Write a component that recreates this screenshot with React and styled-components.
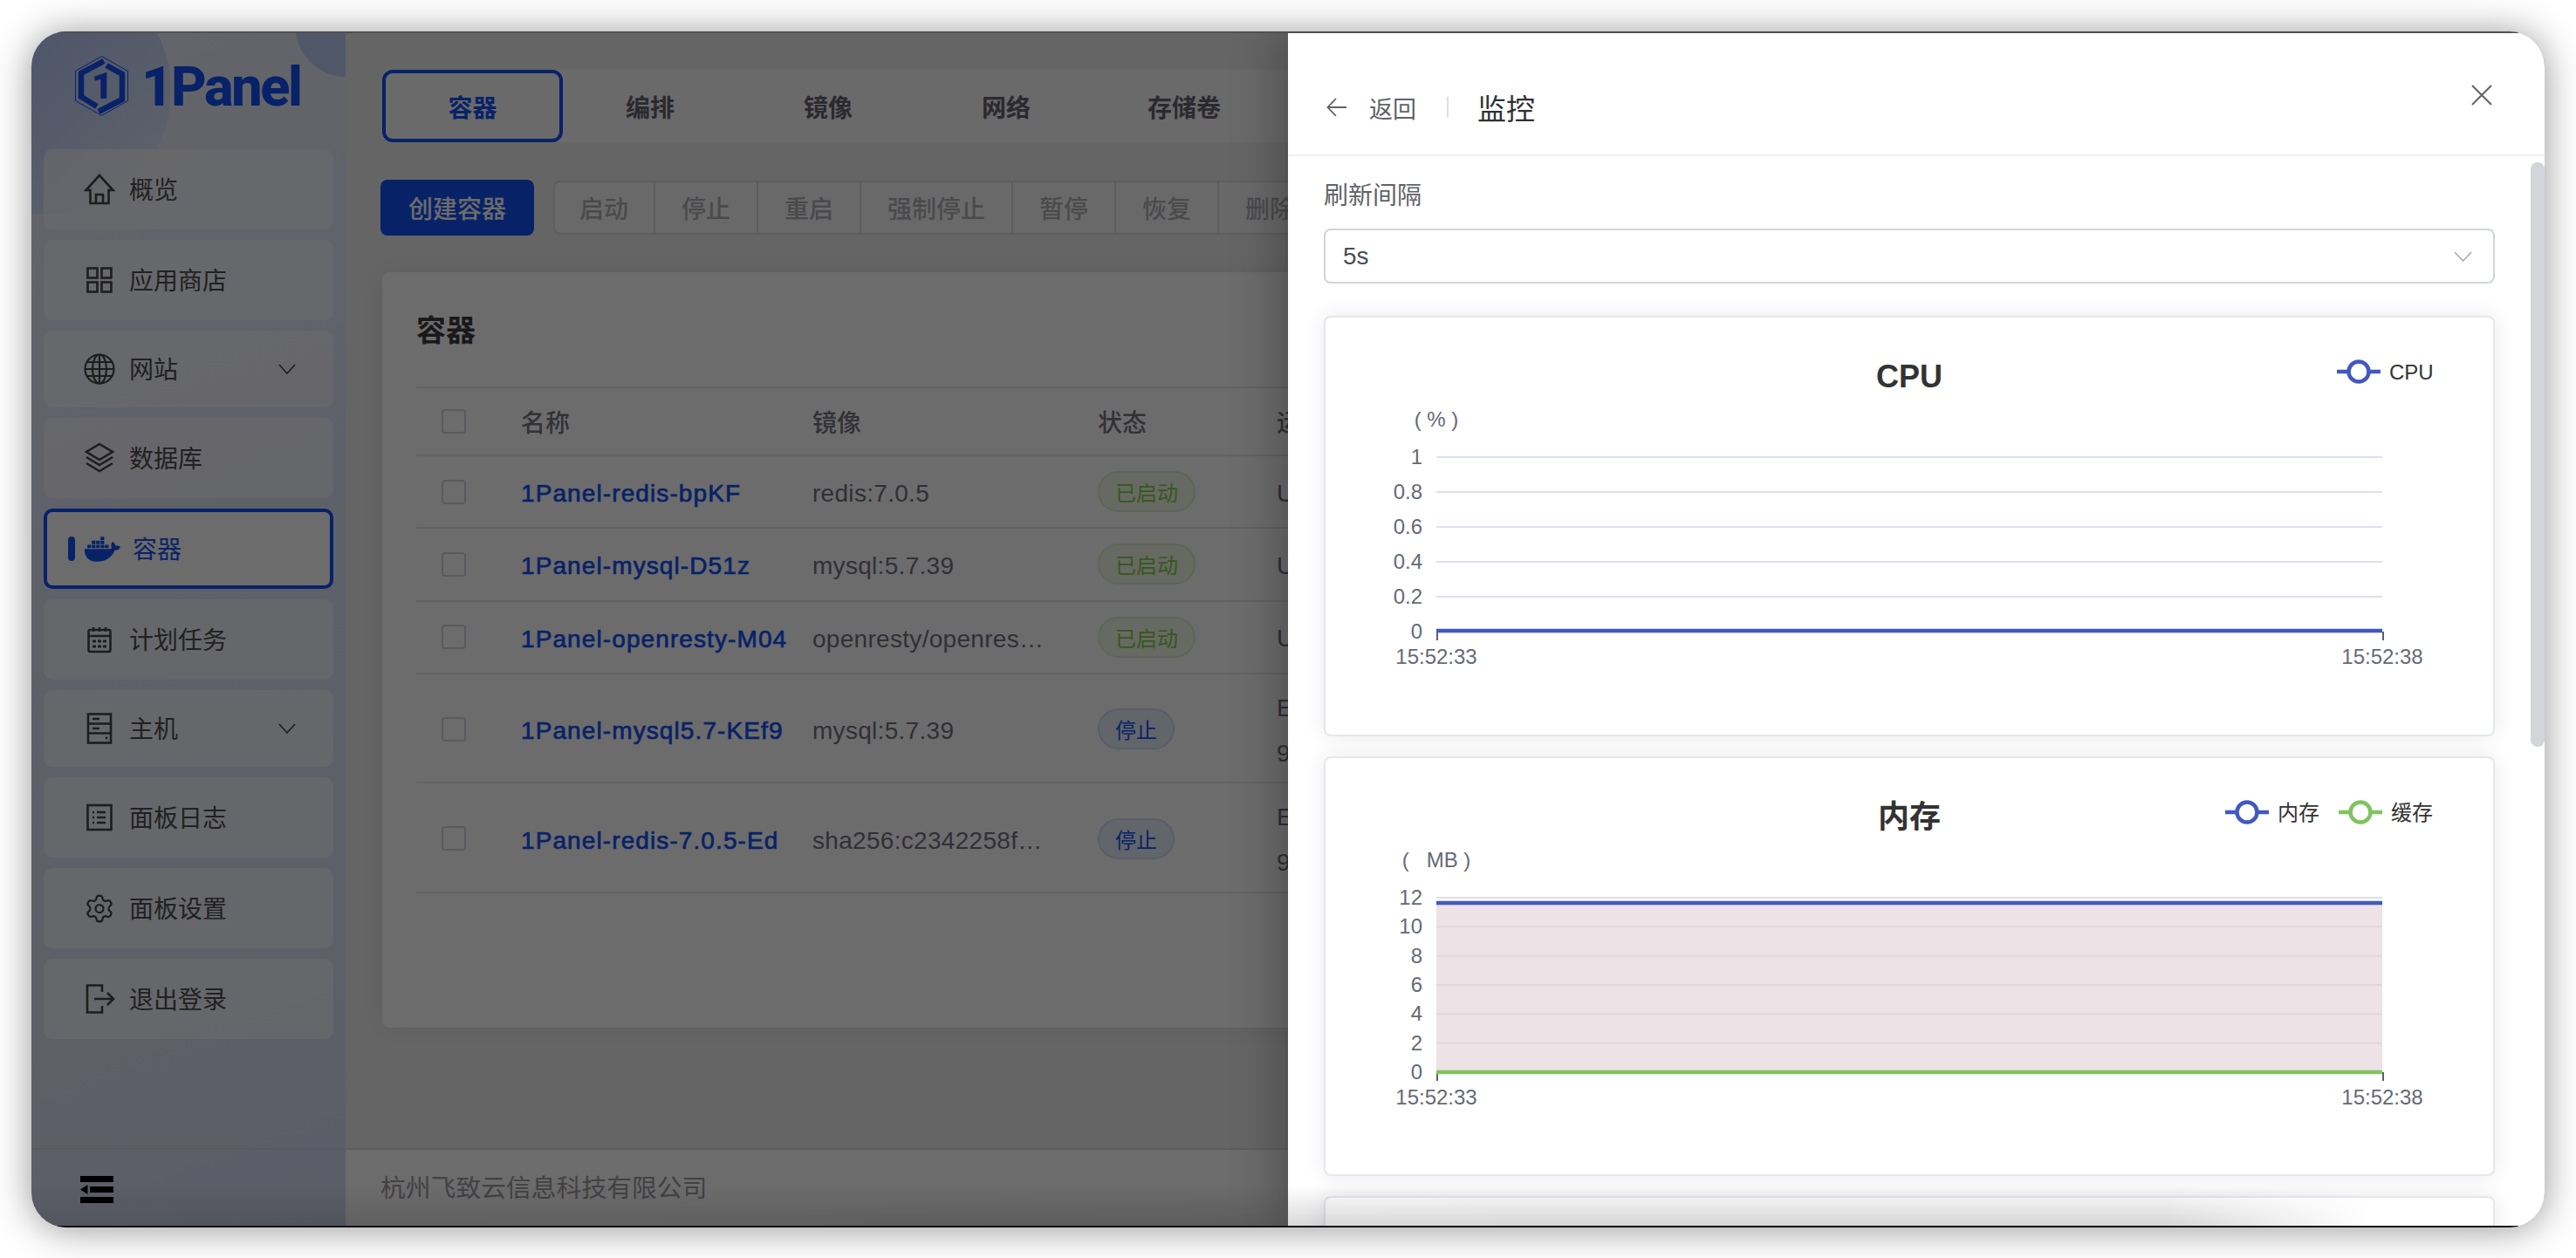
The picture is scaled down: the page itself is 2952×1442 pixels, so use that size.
import React from "react";
import styled, { createGlobalStyle } from "styled-components";
import { Settings } from "lucide-react";
import { FaDocker } from "react-icons/fa";

const GlobalStyle = createGlobalStyle`
  html, body {
    margin: 0;
    padding: 0;
    background: #fff;
    font-family: "Liberation Sans", "Noto Sans CJK SC", sans-serif;
  }
  * { box-sizing: border-box; }
`;

const PRIMARY = "#1350f5";

const HomeIcon = () => (
  <svg width="36" height="36" viewBox="0 0 36 36" fill="none" stroke="currentColor" strokeWidth="2.6">
    <path d="M18 2 2.5 19h5v15h21V19h5Z" />
    <path d="M14 34V24h8v10" />
  </svg>
);
const GridIcon = () => (
  <svg width="36" height="36" viewBox="0 0 36 36" fill="none" stroke="currentColor" strokeWidth="2.6">
    <rect x="4.5" y="4.5" width="11" height="11" />
    <rect x="20.5" y="4.5" width="11" height="11" />
    <rect x="4.5" y="20.5" width="11" height="11" />
    <rect x="20.5" y="20.5" width="11" height="11" />
  </svg>
);
const GlobeIcon = () => (
  <svg width="36" height="36" viewBox="0 0 36 36" fill="none" stroke="currentColor" strokeWidth="2.2">
    <circle cx="18" cy="18" r="16.5" />
    <ellipse cx="18" cy="18" rx="8" ry="16.5" />
    <path d="M18 1.5v33M1.5 18h33M4 10h28M4 26h28" />
  </svg>
);
const LayersIcon = () => (
  <svg width="36" height="36" viewBox="0 0 36 36" fill="none" stroke="currentColor" strokeWidth="2.6">
    <path d="M18 2 33 11 18 20 3 11Z" />
    <path d="M3 17l15 9 15-9" />
    <path d="M3 24l15 9 15-9" />
  </svg>
);
const CalendarIcon = () => (
  <svg width="36" height="36" viewBox="0 0 36 36" fill="none" stroke="currentColor" strokeWidth="2.6">
    <rect x="5.5" y="7" width="25" height="25" rx="2" />
    <path d="M5.5 14h25M11 4v5M18 4v5M25 4v5" />
    <path d="M10 20h4M16 20h4M22 20h4M10 26h4M16 26h4M22 26h4" strokeWidth="3" />
  </svg>
);
const ServerIcon = () => (
  <svg width="36" height="36" viewBox="0 0 36 36" fill="none" stroke="currentColor" strokeWidth="2.6">
    <rect x="5" y="1.5" width="26" height="33" />
    <path d="M5 12.5h26M5 23.5h26M10 7h8M10 18h8" />
    <circle cx="26" cy="29" r="1.4" fill="currentColor" stroke="none" />
  </svg>
);
const LogIcon = () => (
  <svg width="36" height="36" viewBox="0 0 36 36" fill="none" stroke="currentColor" strokeWidth="2.6">
    <rect x="4.5" y="4" width="27" height="28" />
    <path d="M15 12h10M15 18h10M15 24h10" />
    <path d="M10 12h2M10 18h2M10 24h2" />
  </svg>
);
const LogoutIcon = () => (
  <svg width="36" height="36" viewBox="0 0 36 36" fill="none" stroke="currentColor" strokeWidth="2.6">
    <path d="M21 10V2.5H4v31h17V26" />
    <path d="M12 18h21M27 11l7 7-7 7" />
  </svg>
);
const Chevron = () => (
  <svg width="20" height="12" viewBox="0 0 20 12" fill="none" stroke="currentColor" strokeWidth="1.6">
    <path d="M1 1l9 10 9-10" />
  </svg>
);

const navItems = [
  { label: "概览", icon: HomeIcon },
  { label: "应用商店", icon: GridIcon },
  { label: "网站", icon: GlobeIcon, sub: true },
  { label: "数据库", icon: LayersIcon },
  { label: "容器", active: true },
  { label: "计划任务", icon: CalendarIcon },
  { label: "主机", icon: ServerIcon, sub: true },
  { label: "面板日志", icon: LogIcon },
  { label: "面板设置", icon: () => <Settings size={37} strokeWidth={1.5} /> },
  { label: "退出登录", icon: LogoutIcon },
];

const rows = [
  { name: "1Panel-redis-bpKF", image: "redis:7.0.5", running: true, state: "Up 2 hours" },
  { name: "1Panel-mysql-D51z", image: "mysql:5.7.39", running: true, state: "Up 2 hours" },
  { name: "1Panel-openresty-M04", image: "openresty/openresty:1.21.4", running: true, state: "Up 2 hours" },
  { name: "1Panel-mysql5.7-KEf9", image: "mysql:5.7.39", state: "Exited", tall: true },
  { name: "1Panel-redis-7.0.5-Ed", image: "sha256:c2342258f8ca7ab", state: "Exited", tall: true },
];

const tabs = ["容器", "编排", "镜像", "网络", "存储卷"];
const actions = ["启动", "停止", "重启", "强制停止", "暂停", "恢复", "删除"];

const BLUE = "#4358c0";
const GREEN = "#7fc45e";

function Chart({ title, unit, ticks, legend, series }) {
  const top = 160;
  const bottom = 360;
  const step = (bottom - top) / (ticks.length - 1);
  const fill = series.find((s) => s.fill);
  return (
    <ChartCard>
      <svg width="1338" height="477" viewBox="0 0 1338 477">
        <ChartTitle x="669" y="80">{title}</ChartTitle>
        {legend.map((l) => (
          <g key={l.label}>
            <path d={`M${l.x} 62h50`} stroke={l.color} strokeWidth="4.5" />
            <circle cx={l.x + 25} cy="62" r="11.5" fill="#fff" stroke={l.color} strokeWidth="4.5" />
            <LegendText x={l.x + 60} y="71">{l.label}</LegendText>
          </g>
        ))}
        <UnitText x="127" y="125">{unit}</UnitText>
        {fill && <rect x="127" y={fill.y} width="1084" height={bottom - fill.y} fill={fill.fill} />}
        {ticks.map((t, i) => (
          <g key={t}>
            {i < ticks.length - 1 && (
              <path
                d={`M127 ${top + i * step}h1084`}
                stroke={fill ? (i === 0 ? "#dce0ef" : "#e2d6de") : "#dce0ef"}
                strokeWidth="2"
              />
            )}
            <AxisText x="111" y={top + i * step + 8} textAnchor="end">{t}</AxisText>
          </g>
        ))}
        <path d={`M128 ${bottom}v10M1212 ${bottom}v10`} stroke="#5b5f6b" strokeWidth="2" />
        {series.map((s) => (
          <path key={s.color} d={`M127 ${s.y}h1084`} stroke={s.color} strokeWidth="4.5" />
        ))}
        <AxisText x="127" y="397" textAnchor="middle">15:52:33</AxisText>
        <AxisText x="1211" y="397" textAnchor="middle">15:52:38</AxisText>
      </svg>
    </ChartCard>
  );
}

function App() {
  return (
    <Page>
      <GlobalStyle />
      <Window>
        <Sidebar>
          <BigCircle />
          <CornerCircle />
          <Logo>
            <svg width="61" height="69" viewBox="0 0 61 69" fill="none" stroke={PRIMARY}>
              <path d="M30.5.5 60.5 17.5v34l-30 17-30-17v-34Z" strokeWidth="1" />
              <path d="M33 6 7 20v27l18 11" strokeWidth="6.5" />
              <path d="M36 11l18 10v29L27 64" strokeWidth="6.5" />
              <LogoDigit x="19" y="49">1</LogoDigit>
            </svg>
            <LogoText>1Panel</LogoText>
          </Logo>
          <Nav>
            {navItems.map((item) => (
              <NavItem key={item.label} $active={item.active} $sub={item.sub}>
                {item.active ? (
                  <>
                    <ActiveBar />
                    <FaDocker size={41} />
                  </>
                ) : (
                  <NavIcon><item.icon /></NavIcon>
                )}
                <NavLabel $active={item.active}>{item.label}</NavLabel>
                {item.sub && <NavArrow><Chevron /></NavArrow>}
              </NavItem>
            ))}
          </Nav>
          <Collapse>
            <svg width="38" height="31" viewBox="0 0 38 31" fill="#000">
              <rect width="38" height="7" />
              <rect x="11" y="12" width="27" height="7" />
              <rect y="24" width="38" height="7" />
              <path d="M8.5 10v11L0 15.5Z" />
            </svg>
          </Collapse>
        </Sidebar>

        <Main>
          <Content>
            <TabBar>
              {tabs.map((t, i) => (
                <Tab key={t} $active={i === 0}>{t}</Tab>
              ))}
            </TabBar>
            <Toolbar>
              <CreateButton>创建容器</CreateButton>
              <ActionGroup>
                {actions.map((a) => (
                  <Action key={a}>{a}</Action>
                ))}
              </ActionGroup>
            </Toolbar>
            <TableCard>
              <CardTitle>容器</CardTitle>
              <TableHead>
                <CheckCell><Checkbox /></CheckCell>
                <HeadCell>名称</HeadCell>
                <HeadCell>镜像</HeadCell>
                <HeadCell>状态</HeadCell>
                <HeadCell>运行时长</HeadCell>
              </TableHead>
              {rows.map((r) => (
                <TableRow key={r.name} $tall={r.tall}>
                  <CheckCell><Checkbox /></CheckCell>
                  <NameCell>{r.name}</NameCell>
                  <ImageCell>{r.image}</ImageCell>
                  <div><StatusTag $running={r.running}>{r.running ? "已启动" : "停止"}</StatusTag></div>
                  <StateCell>{r.running ? r.state : <>Exited<br />9 hours ago</>}</StateCell>
                </TableRow>
              ))}
            </TableCard>
          </Content>
          <Footer>杭州飞致云信息科技有限公司</Footer>
        </Main>

        <Mask />

        <Drawer>
          <DrawerHeader>
            <svg width="24" height="22" viewBox="0 0 24 22" fill="none" stroke="#606266" strokeWidth="1.8">
              <path d="M23 11H2M11 1 1.5 11 11 21" />
            </svg>
            <BackText>返回</BackText>
            <HeaderDivider />
            <DrawerTitle>监控</DrawerTitle>
            <CloseButton>
              <svg width="24" height="24" viewBox="0 0 24 24" fill="none" stroke="#606266" strokeWidth="2">
                <path d="M1 1l22 22M23 1 1 23" />
              </svg>
            </CloseButton>
          </DrawerHeader>
          <DrawerBody>
            <FieldLabel>刷新间隔</FieldLabel>
            <Select>
              5s
              <svg width="21" height="12" viewBox="0 0 21 12" fill="none" stroke="#a8abb2" strokeWidth="1.6">
                <path d="M1 1l9.5 10L20 1" />
              </svg>
            </Select>
            <Chart
              title="CPU"
              unit="( % )"
              ticks={["1", "0.8", "0.6", "0.4", "0.2", "0"]}
              legend={[{ label: "CPU", color: BLUE, x: 1159 }]}
              series={[{ color: BLUE, y: 359 }]}
            />
            <Chart
              title="内存"
              unit="(   MB )"
              ticks={["12", "10", "8", "6", "4", "2", "0"]}
              legend={[
                { label: "内存", color: BLUE, x: 1031 },
                { label: "缓存", color: GREEN, x: 1161 },
              ]}
              series={[
                { color: BLUE, y: 166, fill: "#ede2e6" },
                { color: GREEN, y: 360 },
              ]}
            />
            <ChartCard />
            <ScrollThumb />
          </DrawerBody>
        </Drawer>
        <EdgeLine $side="top" />
        <EdgeLine $side="bottom" />
        <BottomShade />
      </Window>
    </Page>
  );
}

const Page = styled.div`
  width: 2952px;
  height: 1442px;
  padding: 36px;
  overflow: hidden;
  background: #fff;
`;

const Window = styled.div`
  position: relative;
  display: flex;
  width: 2880px;
  height: 1371px;
  border-radius: 40px;
  overflow: hidden;
  box-shadow: 0 2px 44px rgba(0, 0, 0, 0.42);
`;

const EdgeLine = styled.div`
  position: absolute;
  left: 30px;
  right: 30px;
  ${(p) => p.$side}: 0;
  height: 2px;
  background: ${(p) => (p.$side === "top" ? "#505054" : "#0b1018")};
`;

const Sidebar = styled.aside`
  position: relative;
  display: flex;
  flex-direction: column;
  width: 360px;
  flex-shrink: 0;
  overflow: hidden;
  background: linear-gradient(160deg, #ebeffc 0%, #e0e4f8 45%, #dde2f6 80%, #d5dcf4 100%);
`;

const BigCircle = styled.div`
  position: absolute;
  left: -125px;
  top: -75px;
  width: 285px;
  height: 285px;
  border-radius: 50%;
  background: linear-gradient(135deg, #a9c0f8 15%, #dde4fb 85%);
`;

const CornerCircle = styled.div`
  position: absolute;
  right: -60px;
  top: -66px;
  width: 118px;
  height: 118px;
  border-radius: 50%;
  background: #bccdf6;
`;

const Logo = styled.div`
  position: relative;
  display: flex;
  align-items: center;
  gap: 15px;
  height: 135px;
  padding: 0 0 10px 50px;
  color: ${PRIMARY};
`;

const LogoDigit = styled.text`
  font-family: "Roboto", sans-serif;
  font-weight: 900;
  font-size: 42px;
  fill: ${PRIMARY};
  stroke: none;
`;

const LogoText = styled.span`
  padding-top: 2px;
  font-family: "Roboto", sans-serif;
  font-weight: 800;
  font-size: 63px;
  letter-spacing: -2.4px;
  line-height: 1;
`;

const Nav = styled.nav`
  position: relative;
  flex: 1;
  display: flex;
  flex-direction: column;
  gap: 12px;
  padding: 0 14px;
`;

const NavItem = styled.div`
  display: flex;
  align-items: center;
  height: ${(p) => (p.$sub ? 88 : 92)}px;
  padding-left: ${(p) => (p.$active ? 24 : 46)}px;
  border-radius: 10px;
  color: #464646;
  background: ${(p) => (p.$active ? "#fff" : "rgba(255, 255, 255, 0.55)")};
  border: ${(p) => (p.$active ? `4px solid ${PRIMARY}` : "none")};
  ${(p) => p.$active && `color: ${PRIMARY};`}
`;

const ActiveBar = styled.span`
  width: 8px;
  height: 28px;
  margin-right: 11px;
  border-radius: 4px;
  background: ${PRIMARY};
`;

const NavIcon = styled.span`
  display: flex;
  align-items: center;
  justify-content: center;
  width: 36px;
  height: 36px;
`;

const NavLabel = styled.span`
  margin-left: ${(p) => (p.$active ? 14 : 16)}px;
  padding-bottom: 3px;
  font-size: 28px;
  color: ${(p) => (p.$active ? PRIMARY : "#4e4e4e")};
`;

const NavArrow = styled.span`
  display: flex;
  margin-left: auto;
  margin-right: 43px;
`;

const Collapse = styled.div`
  position: relative;
  display: flex;
  align-items: center;
  height: 91px;
  padding: 2px 0 0 56px;
  border-top: 2px solid #d4d6e0;
`;

const Main = styled.main`
  flex: 1;
  display: flex;
  flex-direction: column;
  min-width: 0;
  background: #efefef;
`;

const Content = styled.div`
  flex: 1;
  min-height: 0;
  padding: 44px 0 0 42px;
  overflow: hidden;
`;

const TabBar = styled.div`
  display: flex;
  height: 83px;
  background: #f9f9f9;
  border-radius: 10px;
`;

const Tab = styled.div`
  display: flex;
  align-items: center;
  justify-content: center;
  flex: none;
  width: ${(p) => (p.$active ? 207 : 204)}px;
  ${(p) => p.$active && "margin-right: -2px;"}
  font-size: 28px;
  font-weight: 600;
  color: ${(p) => (p.$active ? PRIMARY : "#646470")};
  ${(p) => p.$active && `background: #fbfbfb; border: 4px solid ${PRIMARY}; border-radius: 12px;`}
`;

const Toolbar = styled.div`
  display: flex;
  align-items: center;
  gap: 22px;
  height: 64px;
  margin: 43px 0 42px -2px;
`;

const CreateButton = styled.div`
  display: flex;
  align-items: center;
  justify-content: center;
  width: 176px;
  height: 64px;
  flex: none;
  border-radius: 8px;
  font-size: 28px;
  font-weight: 500;
  color: #fff;
  background: ${PRIMARY};
`;

const ActionGroup = styled.div`
  display: flex;
  height: 62px;
  flex: none;
  border: 2px solid #dcdce6;
  border-radius: 8px;
  background: #f8f8f8;
`;

const Action = styled.div`
  display: flex;
  align-items: center;
  padding: 0 30px;
  font-size: 28px;
  font-weight: 500;
  color: #b0b0b4;
  border-right: 2px solid #dcdce6;
  &:first-child {
    padding: 0 29px 0 28px;
  }
`;

const TableCard = styled.section`
  height: 866px;
  padding: 0 0 0 39px;
  background: #fff;
  border-radius: 8px;
  box-shadow: 0 0 30px rgba(0, 0, 0, 0.08);
`;

const CardTitle = styled.h2`
  display: flex;
  align-items: center;
  height: 131px;
  margin: 0;
  padding-bottom: 3px;
  font-size: 34px;
  font-weight: 700;
  color: #3c3c3c;
`;

const gridColumns = "120px 334px 327px 205px 300px";

const TableHead = styled.div`
  display: grid;
  grid-template-columns: ${gridColumns};
  align-items: center;
  height: 80px;
  border-top: 2px solid #e6e6f0;
  border-bottom: 2px solid #e6e6f0;
`;

const HeadCell = styled.div`
  font-size: 28px;
  font-weight: 500;
  color: #767680;
  white-space: nowrap;
`;

const TableRow = styled.div`
  display: grid;
  grid-template-columns: ${gridColumns};
  align-items: center;
  height: ${(p) => (p.$tall ? 125.5 : 83.3)}px;
  ${(p) => p.$tall && "padding-top: 2px;"}
  border-bottom: 2px solid #e6e6f0;
`;

const CheckCell = styled.div`
  padding-left: 29px;
`;

const Checkbox = styled.div`
  width: 28px;
  height: 28px;
  border: 2px solid #d3d5de;
  border-radius: 4px;
`;

const NameCell = styled.div`
  width: 304px;
  padding-top: 5px;
  overflow: hidden;
  white-space: nowrap;
  font-size: 28px;
  letter-spacing: 1.1px;
  color: ${PRIMARY};
  -webkit-text-stroke: 0.7px ${PRIMARY};
`;

const ImageCell = styled.div`
  width: 272px;
  padding-top: 5px;
  overflow: hidden;
  white-space: nowrap;
  text-overflow: ellipsis;
  font-size: 28px;
  letter-spacing: 0.3px;
  color: #73737e;
`;

const StatusTag = styled.span`
  display: inline-flex;
  align-items: center;
  height: 47px;
  padding: 0 18px;
  border-radius: 24px;
  font-size: 24px;
  color: ${(p) => (p.$running ? "#7fcf4a" : PRIMARY)};
  background: ${(p) => (p.$running ? "#f3f8ea" : "#e8eefb")};
  border: 2px solid ${(p) => (p.$running ? "#dfeed0" : "#d2dcf6")};
`;

const StateCell = styled.div`
  padding-top: 4px;
  font-size: 28px;
  line-height: 52px;
  color: #73737e;
  white-space: nowrap;
`;

const Footer = styled.footer`
  display: flex;
  align-items: center;
  height: 91px;
  padding: 0 0 6px 40px;
  border-top: 2px solid #dcdce6;
  background: #fff;
  font-size: 28.8px;
  color: #9c9c9f;
`;

const Mask = styled.div`
  position: absolute;
  inset: 0;
  background: rgba(0, 0, 0, 0.575);
`;

const Drawer = styled.div`
  position: absolute;
  top: 0;
  right: 0;
  bottom: 0;
  width: 1440px;
  display: flex;
  flex-direction: column;
  background: #fff;
  box-shadow: -12px 0 48px rgba(0, 0, 0, 0.25);
`;

const DrawerHeader = styled.header`
  position: relative;
  display: flex;
  align-items: center;
  height: 143px;
  padding: 33px 0 0 44px;
  flex: none;
  border-bottom: 2px solid #eef0f3;
`;

const BackText = styled.span`
  margin-left: 25px;
  font-size: 27px;
  color: #606266;
`;

const HeaderDivider = styled.span`
  width: 2px;
  height: 24px;
  margin: 0 33px 0 35px;
  background: #dcdfe6;
`;

const DrawerTitle = styled.span`
  font-size: 33px;
  color: #303133;
`;

const CloseButton = styled.span`
  position: absolute;
  top: 61px;
  right: 60px;
  display: flex;
`;

const DrawerBody = styled.div`
  position: relative;
  flex: 1;
  min-height: 0;
  overflow: hidden;
  padding: 26px 57px 0 41px;
`;

const FieldLabel = styled.div`
  height: 40px;
  margin-bottom: 17px;
  font-size: 28px;
  line-height: 40px;
  color: #606266;
`;

const Select = styled.div`
  display: flex;
  align-items: center;
  justify-content: space-between;
  height: 63px;
  margin-bottom: 37px;
  padding: 0 24px 0 20px;
  border: 2px solid #d0d4dc;
  border-radius: 8px;
  font-size: 28px;
  color: #4a4d55;
`;

const ChartCard = styled.div`
  height: 481.5px;
  margin-bottom: 23px;
  background: #fff;
  border: 2px solid #e4e7ed;
  border-radius: 8px;
  box-shadow: 0 0 24px rgba(0, 0, 0, 0.09);
  svg { display: block; }
`;

const ChartTitle = styled.text`
  font-size: 36px;
  font-weight: 600;
  fill: #333;
  text-anchor: middle;
`;

const LegendText = styled.text`
  font-size: 24px;
  fill: #333;
`;

const AxisText = styled.text`
  font-size: 24px;
  fill: #666a75;
`;

const UnitText = styled(AxisText)`
  text-anchor: middle;
  white-space: pre;
`;

const ScrollThumb = styled.div`
  position: absolute;
  top: 7px;
  right: 0;
  width: 16px;
  height: 670px;
  border-radius: 8px;
  background: #d4d5da;
`;

const BottomShade = styled.div`
  position: absolute;
  left: 0;
  right: 0;
  bottom: 0;
  height: 48px;
  pointer-events: none;
  background: linear-gradient(to top, rgba(0, 0, 0, 0.17), rgba(0, 0, 0, 0));
  mask-image: linear-gradient(to right, rgba(0,0,0,0.5) 0, #000 60%, #000 85%, transparent 93%);
`;

export default App;
